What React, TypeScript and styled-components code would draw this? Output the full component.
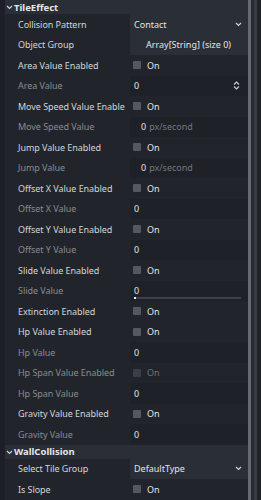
import { FC } from 'react';
import styled, { createGlobalStyle } from 'styled-components';

const GlobalStyle = createGlobalStyle`
  html, body {
    margin: 0;
    padding: 0;
    background: #21252b;
  }
  body {
    font-family: 'Noto Sans', 'DejaVu Sans', sans-serif;
    font-size: 9px;
  }
`;

type Kind = 'dropdown' | 'array' | 'spin' | 'number' | 'suffix' | 'check' | 'slider';

interface Prop {
  label: string;
  dim?: boolean;
  kind: Kind;
  value?: string;
  disabled?: boolean;
}

// labels as the inspector shows them (long ones are cut by the column)
const tileEffect: Prop[] = [
  { label: 'Collision Pattern', kind: 'dropdown', value: 'Contact' },
  { label: 'Object Group', kind: 'array', value: 'Array[String] (size 0)' },
  { label: 'Area Value Enabled', kind: 'check' },
  { label: 'Area Value', dim: true, kind: 'spin', value: '0' },
  { label: 'Move Speed Value Enable', kind: 'check' },
  { label: 'Move Speed Value', dim: true, kind: 'suffix', value: '0' },
  { label: 'Jump Value Enabled', kind: 'check' },
  { label: 'Jump Value', dim: true, kind: 'suffix', value: '0' },
  { label: 'Offset X Value Enabled', kind: 'check' },
  { label: 'Offset X Value', dim: true, kind: 'number', value: '0' },
  { label: 'Offset Y Value Enabled', kind: 'check' },
  { label: 'Offset Y Value', dim: true, kind: 'number', value: '0' },
  { label: 'Slide Value Enabled', kind: 'check' },
  { label: 'Slide Value', dim: true, kind: 'slider', value: '0' },
  { label: 'Extinction Enabled', kind: 'check' },
  { label: 'Hp Value Enabled', kind: 'check' },
  { label: 'Hp Value', dim: true, kind: 'number', value: '0' },
  { label: 'Hp Span Value Enabled', dim: true, kind: 'check', disabled: true },
  { label: 'Hp Span Value', dim: true, kind: 'number', value: '0' },
  { label: 'Gravity Value Enabled', kind: 'check' },
  { label: 'Gravity Value', dim: true, kind: 'number', value: '0' },
];

const wallCollision: Prop[] = [
  { label: 'Select Tile Group', kind: 'dropdown', value: 'DefaultType' },
  { label: 'Is Slope', kind: 'check' },
];

const Chevron: FC = () => (
  <svg width="7" height="5" viewBox="0 0 7 5">
    <path d="M1 1 L3.5 3.5 L6 1" fill="none" stroke="#cfd1d4" strokeWidth="1.2" />
  </svg>
);

const SpinArrows: FC = () => (
  <svg width="7" height="9" viewBox="0 0 7 9">
    <path d="M1 3.5 L3.5 1 L6 3.5 M1 5.5 L3.5 8 L6 5.5" fill="none" stroke="#cfd1d4" strokeWidth="1.1" />
  </svg>
);

const Value: FC<{ p: Prop }> = ({ p }) => {
  switch (p.kind) {
    case 'dropdown':
      return (
        <DropButton>
          <span>{p.value}</span>
          <Chevron />
        </DropButton>
      );
    case 'array':
      return (
        <ArrayButton>
          <span>{p.value}</span>
        </ArrayButton>
      );
    case 'spin':
      return (
        <NumberBox>
          <span>{p.value}</span>
          <SpinArrows />
        </NumberBox>
      );
    case 'suffix':
      return (
        <NumberBox $indent>
          <span>{p.value}</span>
          <Suffix>px/second</Suffix>
        </NumberBox>
      );
    case 'slider':
      return (
        <SliderBox>
          <span>{p.value}</span>
          <Track>
            <Knob />
          </Track>
        </SliderBox>
      );
    case 'check':
      return (
        <CheckWrap $disabled={p.disabled}>
          <Box $disabled={p.disabled} />
          On
        </CheckWrap>
      );
    default:
      return <NumberBox>{p.value}</NumberBox>;
  }
};

const Section: FC<{ title: string; props: Prop[] }> = ({ title, props }) => (
  <>
    <Header>
      <Chevron />
      <HeaderTitle>{title}</HeaderTitle>
    </Header>
    {props.map((p) => (
      <Row key={p.label}>
        <Label $dim={p.dim}>{p.label}</Label>
        <Value p={p} />
      </Row>
    ))}
  </>
);

export default function App() {
  return (
    <Frame>
      <GlobalStyle />
      <Gutter />
      <Inspector>
        <Section title="TileEffect" props={tileEffect} />
        <Section title="WallCollision" props={wallCollision} />
      </Inspector>
      <ScrollBar>
        <Grabber />
        <Gap />
        <Rail />
      </ScrollBar>
    </Frame>
  );
}

const Frame = styled.div`
  display: flex;
  width: 261px;
  height: 500px;
  overflow: hidden;
  background: #21252b;
`;

const Gutter = styled.div`
  width: 5px;
  background: #1c1f25;
  flex-shrink: 0;
`;

const Inspector = styled.div`
  flex: 1;
  display: flex;
  flex-direction: column;
  min-width: 0;
`;

const Header = styled.div`
  height: 14px;
  display: flex;
  align-items: center;
  gap: 1px;
  padding-left: 1px;
  background: #2a2e36;
  svg {
    margin-top: 1px;
  }
`;

const HeaderTitle = styled.span`
  font-weight: bold;
  font-size: 9.5px;
  color: #e6e7e9;
`;

const Row = styled.div`
  height: 20.5px;
  display: grid;
  grid-template-columns: 119px minmax(0, 1fr);
  column-gap: 6px;
  align-items: center;
`;

const Label = styled.div<{ $dim?: boolean }>`
  padding-left: 13px;
  color: ${(p) => (p.$dim ? '#888b90' : '#d3d5d8')};
  white-space: nowrap;
  letter-spacing: -0.05px;
`;

const Cell = styled.div`
  height: 100%;
  display: flex;
  align-items: center;
  padding: 0 4px;
  color: #e2e3e5;
  box-sizing: border-box;
  white-space: nowrap;
  min-width: 0;
`;

const DropButton = styled(Cell)`
  justify-content: space-between;
  background: #2a2e36;
  padding-right: 6px;
`;

const ArrayButton = styled(Cell)`
  justify-content: flex-start;
  padding-left: 16px;
  background: #2a2e36;
`;

const NumberBox = styled(Cell)<{ $indent?: boolean }>`
  justify-content: ${(p) => (p.$indent ? 'flex-start' : 'space-between')};
  padding-left: ${(p) => (p.$indent ? '11px' : '4px')};
  padding-right: 8px;
  gap: 3px;
  background: #1e2127;
`;

const Suffix = styled.span`
  color: #73777d;
`;

const SliderBox = styled(Cell)`
  flex-direction: column;
  align-items: stretch;
  justify-content: center;
  gap: 1px;
  background: #1e2127;
  padding-right: 7px;
  span {
    line-height: 11px;
    padding-top: 2px;
  }
`;

const Track = styled.div`
  height: 2px;
  background: #3c4047;
  position: relative;
`;

const Knob = styled.div`
  position: absolute;
  left: 0;
  top: 0;
  width: 2px;
  height: 2px;
  background: #f0f0f0;
`;

const CheckWrap = styled(Cell)<{ $disabled?: boolean }>`
  gap: 6px;
  padding-left: 3px;
  color: ${(p) => (p.$disabled ? '#6c7075' : '#e2e3e5')};
`;

const Box = styled.div<{ $disabled?: boolean }>`
  width: 8px;
  height: 8px;
  border-radius: 1px;
  background: ${(p) => (p.$disabled ? '#3a3e45' : '#54585f')};
`;

const ScrollBar = styled.div`
  width: 13px;
  flex-shrink: 0;
  display: flex;
  background: #1f2227;
`;

const Grabber = styled.div`
  width: 3px;
  background: #676b71;
`;

const Gap = styled.div`
  width: 3px;
  background: #26292f;
`;

const Rail = styled.div`
  width: 3px;
  background: #373b42;
`;
